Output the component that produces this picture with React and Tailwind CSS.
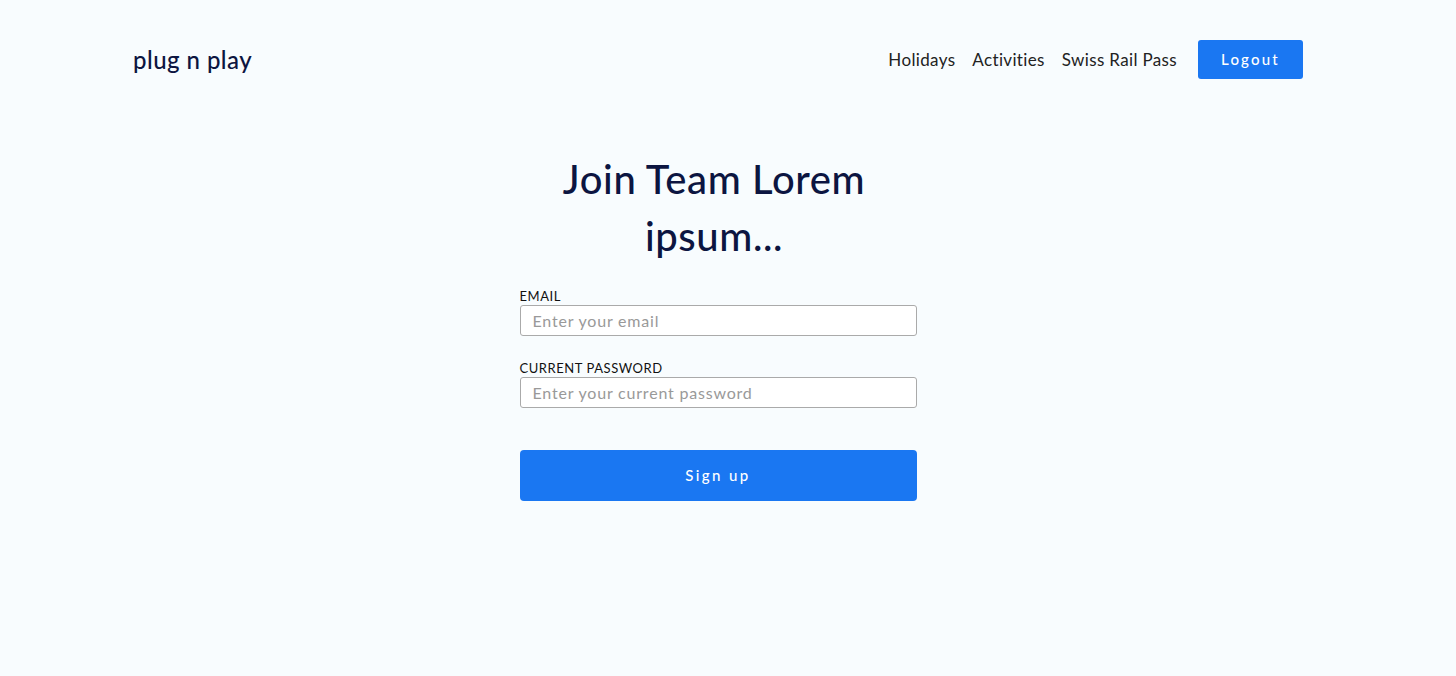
import React from 'react';

const links = ['Holidays', 'Activities', 'Swiss Rail Pass'];

export default function App() {
  return (
    <div className="min-h-[676px] bg-[#f8fcfe] pr-5 font-['Lato','Open_Sans',sans-serif] text-[#0c1541]">
      <header className="mx-auto flex w-[1170px] items-center justify-between pt-10">
        <a href="#" className="text-[24px] font-medium tracking-[0.45px] text-[#0c1541]">
          plug n play
        </a>
        <nav className="flex items-center">
          {links.map((link) => (
            <a key={link} href="#" className="mr-[17px] text-[17px] tracking-[0.35px] text-[#222]">
              {link}
            </a>
          ))}
          <button
            type="button"
            className="ml-1 h-[39px] w-[105px] rounded-[3px] bg-[#1a77f2] text-[15px] font-medium tracking-[2.2px] text-white"
          >
            Logout
          </button>
        </nav>
      </header>

      <main className="mx-auto mt-[72px] w-[397px]">
        <h1 className="pl-[28px] pr-[36px] text-center text-[40px] font-medium leading-[57px] tracking-[0.6px] text-[#0c1541]">
          Join Team Lorem ipsum...
        </h1>
        <form className="mt-[23px]" onSubmit={(e) => e.preventDefault()}>
          <label className="block text-[13px] leading-[16px] tracking-[0.55px] text-[#111]">EMAIL</label>
          <input
            type="email"
            placeholder="Enter your email"
            className="mt-[1px] h-[31px] w-full rounded-[3px] border border-[#aaa] bg-white px-3 text-[16px] tracking-[0.8px] placeholder:text-[#999] outline-none"
          />
          <label className="mt-[24px] block text-[13px] leading-[16px] tracking-[0.55px] text-[#111]">
            CURRENT PASSWORD
          </label>
          <input
            type="password"
            placeholder="Enter your current password"
            className="mt-[1px] h-[31px] w-full rounded-[3px] border border-[#aaa] bg-white px-3 text-[16px] tracking-[0.8px] placeholder:text-[#999] outline-none"
          />
          <button
            type="submit"
            className="mt-[42px] h-[51px] w-full rounded-[4px] bg-[#1a77f2] text-[15px] font-medium tracking-[2.4px] text-white"
          >
            Sign up
          </button>
        </form>
      </main>
    </div>
  );
}
